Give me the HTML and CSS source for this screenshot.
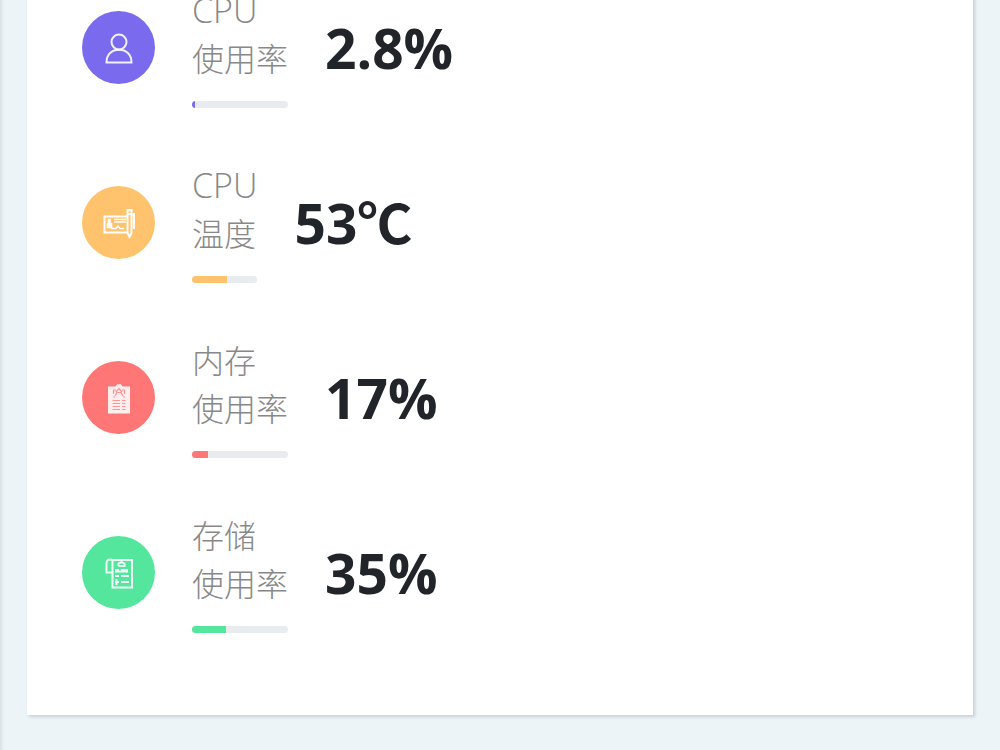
FILE: index.html
```html
<!DOCTYPE html>
<html lang="zh-CN">
<head>
<meta charset="utf-8">
<meta name="viewport" content="width=device-width, initial-scale=1">
<title>系统状态</title>
<link rel="stylesheet" href="styles.css">
</head>
<body>
<main class="page">
  <section class="card">
    <article class="stat stat-violet">
      <div class="badge">
        <svg class="icon" viewBox="0 0 32 32" fill="none" stroke="#fff" stroke-width="2" stroke-opacity=".9" aria-hidden="true">
          <circle cx="16" cy="10" r="7.500"/>
          <path d="M3.500 30.500C3.500 22 9 17.800 16 17.800S28.500 22 28.500 30.500Z"/>
        </svg>
      </div>
      <div class="info">
        <div class="label"><span class="latin">CPU</span><br>使用率</div>
        <div class="track" role="progressbar" aria-label="CPU使用率" aria-valuenow="2.8" aria-valuemin="0" aria-valuemax="100"><div class="fill" style="width:2.8%"></div></div>
      </div>
      <strong class="value">2.8%</strong>
    </article>
    <article class="stat stat-orange">
      <div class="badge">
        <svg class="icon" viewBox="0 0 32 32" fill="none" stroke="#fff" stroke-width="2" aria-hidden="true">
          <path d="M24 9.500H1.500V25.500H24"/>
          <path d="M8 21.500H13L15 19L17 21.500H21M11 12.500H23M11 15H23" stroke-width="1.500"/>
          <path d="M24.500 3H28.500V26L26.500 30L24.500 26ZM24.500 7H31V22"/>
          <path d="M5 12H7.500V16H9V21H4V16H5Z" fill="#fff" stroke-width=".6"/>
        </svg>
      </div>
      <div class="info">
        <div class="label"><span class="latin">CPU</span><br>温度</div>
        <div class="track" role="progressbar" aria-label="CPU温度" aria-valuenow="53" aria-valuemin="0" aria-valuemax="100"><div class="fill" style="width:53%"></div></div>
      </div>
      <strong class="value">53℃</strong>
    </article>
    <article class="stat stat-red">
      <div class="badge">
        <svg class="icon" viewBox="0 0 32 32" fill="none" aria-hidden="true">
          <path d="M5 4.500H12.500L14 2.300H18L19.500 4.500H27V31.500H5Z" fill="#fff" fill-opacity=".88"/>
          <g stroke="#ff7676" stroke-width="1.200" stroke-opacity=".75">
            <path d="M10.500 12V8H13M19 8H21.500V12M13 10L16 6.500L19 10M12 14L14 10.500H18L20 14M10 15H12M20 15H22"/>
            <path d="M9.500 18.500H17M19 18.500H22.500M9.500 21.500H17M19 21.500H22.500M9.500 24.500H17M19 24.500H22.500M9.500 27.500H17M19 27.500H22.500"/>
          </g>
        </svg>
      </div>
      <div class="info">
        <div class="label">内存<br>使用率</div>
        <div class="track" role="progressbar" aria-label="内存使用率" aria-valuenow="17" aria-valuemin="0" aria-valuemax="100"><div class="fill" style="width:17%"></div></div>
      </div>
      <strong class="value">17%</strong>
    </article>
    <article class="stat stat-green">
      <div class="badge">
        <svg class="icon" viewBox="0 0 32 32" fill="none" stroke="#fff" stroke-width="2" stroke-opacity=".9" aria-hidden="true">
          <path d="M9.500 3H29V30.500H9.500V3C5 1.500 3.500 3 3.500 7V15.500H9.500"/>
          <path d="M15.500 9V6.500L18.500 5L21.500 6.500V9H15.500M12 13H16M18 13H25M12 14.500H25M12 19H16M18 19H26M12 25H16M18 25H26M13.500 22V28"/>
        </svg>
      </div>
      <div class="info">
        <div class="label">存储<br>使用率</div>
        <div class="track" role="progressbar" aria-label="存储使用率" aria-valuenow="35" aria-valuemin="0" aria-valuemax="100"><div class="fill" style="width:35%"></div></div>
      </div>
      <strong class="value">35%</strong>
    </article>
  </section>
</main>
</body>
</html>
```
FILE: styles.css
```css
* {
  box-sizing: border-box;
}

body {
  margin: 0;
  min-height: 100vh;
  overflow: hidden;
  background: linear-gradient(to right, #d8e0e4, #ecf4f8 4px);
  color: #212529;
  font-family: "Open Sans", "Noto Sans CJK SC", sans-serif;
}

.page {
  display: flow-root;
  padding: 0 27px 35px;
}

.card {
  display: flex;
  flex-direction: column;
  gap: 54px;
  margin-top: -40px;
  padding: 27px 55px 82px;
  background: #fff;
  box-shadow: 2px 2px 3px rgba(60, 70, 80, 0.2);
}

.stat {
  display: flex;
  align-items: center;
  gap: 37px;
}

.badge {
  display: flex;
  flex: none;
  align-items: center;
  justify-content: center;
  width: 73px;
  height: 73px;
  border-radius: 50%;
  background: var(--accent);
}

.icon {
  width: 32px;
  height: 32px;
}

.label {
  color: #888;
  font-size: 32px;
  font-weight: 300;
  line-height: 48px;
  white-space: nowrap;
}

.latin {
  font-size: 34px;
  line-height: 1;
}

.track {
  height: 7px;
  margin-top: 18px;
  overflow: hidden;
  border-radius: 4px;
  background: #e9ecef;
}

.fill {
  height: 100%;
  background: var(--accent);
}

.value {
  font-size: 55px;
  font-weight: 700;
  line-height: 72px;
}

.stat-violet {
  --accent: #796aee;
}

.stat-orange {
  --accent: #ffc36d;
}

.stat-red {
  --accent: #ff7676;
}

.stat-green {
  --accent: #54e69d;
}
```
